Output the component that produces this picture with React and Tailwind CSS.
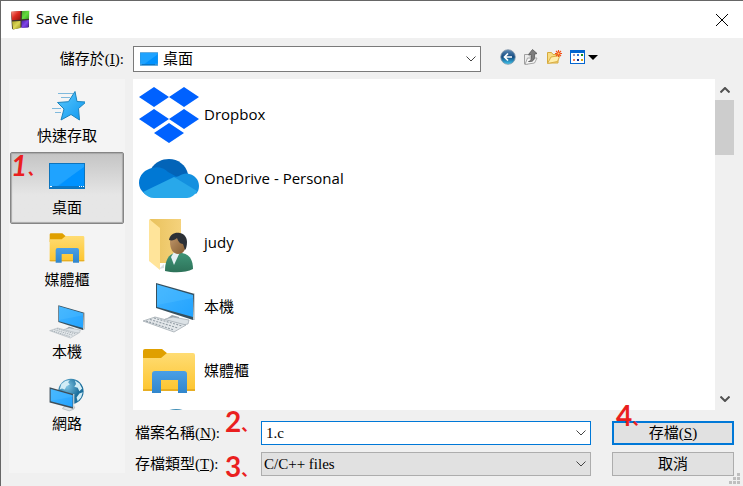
import React from 'react';

const SANS = 'font-["Open_Sans","Noto_Sans_CJK_TC",sans-serif]';
const SERIF = 'font-["Liberation_Serif","Noto_Sans_CJK_TC",serif]';

function AppLogo() {
  return (
    <svg viewBox="0 0 20 20" className="size-5" aria-hidden="true">
      <defs>
        <linearGradient id="lr" x2="1" y2="1"><stop stopColor="#ff9a8c" /><stop offset=".5" stopColor="#dc2a20" /><stop offset="1" stopColor="#8f1510" /></linearGradient>
        <linearGradient id="lg" x2="1" y2="1"><stop stopColor="#4ea530" /><stop offset=".5" stopColor="#62dc3e" /><stop offset="1" stopColor="#3a9a24" /></linearGradient>
        <linearGradient id="ly" x2="1" y2="1"><stop stopColor="#a8a226" /><stop offset=".5" stopColor="#dcd656" /><stop offset="1" stopColor="#95901a" /></linearGradient>
        <linearGradient id="lp" x2="1" y2="1"><stop stopColor="#4a22a0" /><stop offset=".5" stopColor="#7f45e6" /><stop offset="1" stopColor="#4519a8" /></linearGradient>
      </defs>
      <path d="M1 2l9-1h9v16l-8 .5-8 2-1-1z" fill="#3a322a" />
      <path d="M1 1.500L10.500 1v8.700L2 10.200z" fill="url(#lr)" />
      <path d="M12 1l7.300-.2-.3 8-7.200.5z" fill="url(#lg)" />
      <path d="M2 11.500l8.500-.6v7L3 19.500z" fill="url(#ly)" />
      <path d="M11.500 10.700l7.400-.6-.4 7.300-7 .6z" fill="url(#lp)" />
    </svg>
  );
}

function MonitorIcon({ className }) {
  return (
    <svg viewBox="0 0 36 36" className={className} aria-hidden="true">
      <rect x=".5" y="3.500" width="35" height="25" fill="#169cfb" stroke="#0d74bd" />
      <path d="M7 28L35 6v20H7z" fill="#0092ff" />
      <path d="M1 4h34v3L8 26H1z" fill="#1fa3ff" />
      <rect x="1" y="26" width="34" height="2" fill="#0b77c5" />
      <path d="M1 26.500h2M30 26.500h1M32 26.500h1M34 26.500h1" stroke="#fff" />
    </svg>
  );
}

function StarIcon({ className }) {
  return (
    <svg viewBox="0 0 36 36" className={className} aria-hidden="true">
      <defs><linearGradient id="st" x2="1" y2="1"><stop stopColor="#5cc8fa" /><stop offset="1" stopColor="#0c97f2" /></linearGradient></defs>
      <path d="M9 5.500h15M12 9.500h9M3 20.500h9M6 24.500h6" stroke="#7fb9dc" />
      <path d="M26 3.500l2 10 9 .5-7.500 6.500 1 11.500-8.500-5.500-10 5.500 3-11-6.500-6.500 11-.8z" fill="url(#st)" stroke="#1a83bd" strokeLinejoin="round" />
    </svg>
  );
}

function LibraryIcon({ className, viewBox = '0 0 64 64' }) {
  return (
    <svg viewBox={viewBox} className={className} aria-hidden="true">
      <defs>
        <linearGradient id="lf" x2="0" y2="1"><stop stopColor="#ffdc73" /><stop offset="1" stopColor="#fdc52f" /></linearGradient>
        <linearGradient id="lb" x2="0" y2="1"><stop stopColor="#4a9fe6" /><stop offset="1" stopColor="#3186cc" /></linearGradient>
      </defs>
      <path d="M6 12a2 2 0 0 1 2-2h17l6 5-6 8H6z" fill="#e0a000" />
      <path d="M6 19h18l6-5h26a2 2 0 0 1 2 2v34a2 2 0 0 1-2 2H8a2 2 0 0 1-2-2z" fill="url(#lf)" />
      <path d="M6 50h52v2H6z" fill="#e7ae23" />
      <path d="M15 54V35q0-3 3-3h29q3 0 3 3v19h-9V41H24v13z" fill="url(#lb)" />
    </svg>
  );
}

function ComputerIcon({ className, viewBox = '0 -1 64 64' }) {
  return (
    <svg viewBox={viewBox} className={className} aria-hidden="true">
      <defs><linearGradient id="pc" x2="1" y2="1"><stop stopColor="#42b4ff" /><stop offset="1" stopColor="#22a3ff" /></linearGradient></defs>
      <path d="M35 39l7 2v4l-14-1z" fill="#9ba6ae" />
      <path d="M28 43l8-2 16 3-1 4-11 2-12-4z" fill="#dce2e6" stroke="#a0a9b0" strokeWidth=".7" />
      <path d="M19 7l39 11v25l-2 1-37-12z" fill="#36505f" />
      <path d="M57 18h1v25l-2 1z" fill="#ccd4d8" />
      <path d="M20 8.500l36 10.500v22L20 31z" fill="url(#pc)" />
      <path d="M20 8.500l36 10.500v3L20 29z" fill="#5bc3ff" opacity=".3" />
      <path d="M6 45l12-4 31 8-12 7z" fill="#e3e7ea" stroke="#a3acb3" strokeWidth=".8" />
      <path d="M9 45l28 9M13 43.500l28 8.500M17 42l28 8" stroke="#929da5" strokeDasharray="2 1.300" strokeWidth="1.100" />
    </svg>
  );
}

function NetworkIcon({ className }) {
  return (
    <svg viewBox="0 0 64 64" className={className} aria-hidden="true">
      <defs>
        <radialGradient id="gl" cx=".35" cy=".3"><stop stopColor="#7fc4e2" /><stop offset="1" stopColor="#1c6f9d" /></radialGradient>
        <linearGradient id="ns" x2="1" y2="1"><stop stopColor="#42b4ff" /><stop offset="1" stopColor="#22a3ff" /></linearGradient>
      </defs>
      <circle cx="39" cy="27.500" r="22.500" fill="url(#gl)" />
      <path d="M22 14l7-5 8-2-3 4 3 4-6 3-3 6-5-2-4 2zM46 8l8 5 5 9-5 5-3-6-6-2 3-5zM54 31l6-2-3 9-6 7-2-7z" fill="#d2edf6" />
      <path d="M26 55l8-3 12 3-2 4-8 3-12-4z" fill="#dce2e6" stroke="#9ba5ac" />
      <path d="M1 20l42 12v26L1 47z" fill="#3e4e59" />
      <path d="M43 32h2v25l-2 1z" fill="#d4dadd" />
      <path d="M3 23l39 11v21L3 45z" fill="url(#ns)" />
      <path d="M3 23l39 11v3L3 44z" fill="#5bc3ff" opacity=".3" />
    </svg>
  );
}

function DropboxIcon({ className }) {
  return (
    <svg viewBox="0 0 64 64" className={className} aria-hidden="true">
      <path d="M17 4l15 10-15 10L2 14zM47 4l15 10-15 10-15-10zM17 26l15 10-15 10L2 36zM47 26l15 10-15 10-15-10zM32 40l15 10-15 10-15-10z" fill="#0061ff" />
    </svg>
  );
}

function OneDriveIcon({ className }) {
  return (
    <svg viewBox="0 0 64 64" className={className} aria-hidden="true">
      <path d="M14 22c4-7 11-10 18-10 9 0 17 6 19 15l-6 5-9 0z" fill="#0364b8" />
      <path d="M16 21c7-2 12 1 15 4l11 6-34 16C4 44 2 40 2 36c0-8 6-14 14-15z" fill="#0078d4" />
      <path d="M36 31l6-2c3-2 7-3 10-2 6 1 10 6 10 12 0 3-1 6-3 8z" fill="#1490df" />
      <path d="M37 30l23 14c-2 4-6 7-10 7H17c-4 0-8-2-11-6z" fill="#28a8ea" />
    </svg>
  );
}

function UserFolderIcon({ className }) {
  return (
    <svg viewBox="0 0 64 64" className={className} aria-hidden="true">
      <defs>
        <linearGradient id="uf" x2="1" y2="0"><stop stopColor="#e9c25d" /><stop offset="1" stopColor="#f5d27c" /></linearGradient>
        <linearGradient id="ub" x2="0" y2="1"><stop stopColor="#3f9577" /><stop offset="1" stopColor="#2d7259" /></linearGradient>
        <linearGradient id="us" x2="1" y2="1"><stop stopColor="#c49a6d" /><stop offset="1" stopColor="#80592f" /></linearGradient>
      </defs>
      <path d="M13 8h31v44H20z" fill="url(#uf)" />
      <path d="M12 8l11 9v42l-11-9z" fill="#ffe49a" />
      <path d="M22 58l5-5v4z" fill="#d9dfe3" />
      <path d="M28 60c0-11 4-17 10-18h7c6 1 11 5 11 16-7 4-20 4-28 2z" fill="url(#ub)" />
      <path d="M34 46l3-5h6l-6 13z" fill="#e5f0f4" />
      <path d="M33 31c0-6 3-8 8-8s8 4 8 10-3 10-8 10-8-5-8-12z" fill="url(#us)" />
      <path d="M32 29c1-6 6-8 11-7s7 5 7 9-1 7-2 8l-2-6c-3 0-5-3-6-6-2 2-5 3-8 2z" fill="#2c3036" />
    </svg>
  );
}

function BackIcon() {
  return (
    <svg viewBox="0 0 16 16" className="size-4" aria-hidden="true">
      <defs><linearGradient id="bk" x2="0" y2="1"><stop stopColor="#5f8ab5" /><stop offset=".5" stopColor="#124a80" /><stop offset="1" stopColor="#3ec9f2" /></linearGradient></defs>
      <circle cx="8" cy="8" r="7.300" fill="url(#bk)" stroke="#8497a8" strokeWidth=".8" />
      <path d="M12 8H5M8 4.500L4.500 8 8 11.500" fill="none" stroke="#fff" strokeWidth="1.700" />
    </svg>
  );
}

function UpIcon() {
  return (
    <svg viewBox="0 0 16 16" className="size-4" aria-hidden="true">
      <path d="M1.500 15V5.500h4l1 1.500H9v4l-4 4z" fill="#ececec" stroke="#a0a0a0" />
      <path d="M2 15.500L4.500 9H14l-2.500 5z" fill="#f7f7f7" stroke="#a6a6a6" />
      <path d="M5.500 12.500C8.500 12 8.500 9 8.300 5.500H5.500L9.500.5l4.500 4-2.500.7c.6 5-1 8-6 7.300z" fill="#7d7d7d" stroke="#555" strokeWidth=".8" />
    </svg>
  );
}

function NewFolderIcon() {
  return (
    <svg viewBox="0 0 16 16" className="size-4" aria-hidden="true">
      <path d="M1.500 14V3.500h4l1.500 2h5V14z" fill="#f8dc82" stroke="#d6aa3c" />
      <path d="M1.500 14.500L5 8l9-1.500-2.500 6z" fill="#ffeeaa" stroke="#d9ad44" />
      <path d="M12.500 1v7M9 4.500h7M10 2l5 5M15 2l-5 5" stroke="#f2511b" strokeWidth="1.100" />
      <circle cx="12.500" cy="4.500" r="1" fill="#ffd36b" />
    </svg>
  );
}

function ViewIcon() {
  return (
    <svg viewBox="0 0 16 16" className="size-4" aria-hidden="true">
      <rect x="1.500" y="1.500" width="14" height="13" fill="#fff" stroke="#0566d0" />
      <path d="M1 1h15v3H1z" fill="#0566d0" />
      <path d="M4 5h2v2H4z" fill="#9c96b8" /><path d="M8 5h2v2H8z" fill="#3278d8" /><path d="M12 5h2v2h-2z" fill="#1a8a20" />
      <path d="M4 10h2v2H4z" fill="#f08058" /><path d="M8 10h2v2H8z" fill="#102d8c" /><path d="M12 10h2v2h-2z" fill="#d6a010" />
    </svg>
  );
}

function Chevron({ className }) {
  return (
    <svg viewBox="0 0 10 6" className={className} fill="none" stroke="currentColor" aria-hidden="true">
      <path d="M.5.500L5 5 9.500.5" />
    </svg>
  );
}

function Mark({ digit, className }) {
  return (
    <span className={`pointer-events-none absolute flex items-end font-["Lato","Noto_Sans_CJK_JP",sans-serif] text-[28px] leading-6 font-bold text-[#ea1f1f] ${className}`}>
      {digit}<span className="-mb-1 text-base leading-6">、</span>
    </span>
  );
}

const places = [
  { name: '快速存取', Icon: StarIcon },
  { name: '桌面', Icon: MonitorIcon, active: true },
  { name: '媒體櫃', Icon: LibraryIcon, viewBox: '5 8 54 54' },
  { name: '本機', Icon: ComputerIcon, viewBox: '5 5 54 54' },
  { name: '網路', Icon: NetworkIcon },
];

const files = [
  { name: 'Dropbox', Icon: DropboxIcon },
  { name: 'OneDrive - Personal', Icon: OneDriveIcon },
  { name: 'judy', Icon: UserFolderIcon },
  { name: '本機', Icon: ComputerIcon },
  { name: '媒體櫃', Icon: LibraryIcon },
];

export default function App() {
  return (
    <div className={`relative flex h-screen flex-col overflow-hidden border-t border-l border-[#666] bg-[#f0f0f0] text-[15px] text-black ${SANS}`}>
      <header className="flex h-[37px] shrink-0 items-center bg-white pr-3.5 pl-[9px]">
        <AppLogo />
        <h1 className="ml-1.5 flex-1 pb-0.5">Save file</h1>
        <button aria-label="Close">
          <svg viewBox="0 0 14 14" className="size-3.5" stroke="#000" aria-hidden="true"><path d="M1 1l12 12M13 1L1 13" /></svg>
        </button>
      </header>

      <div className="flex shrink-0 items-center pt-2 pb-[7px]">
        <label htmlFor="folder" className={`w-[132px] shrink-0 pr-[9px] text-right ${SERIF}`}>儲存於(<u>I</u>):</label>
        <div className="relative w-[348px] min-w-0">
          <select id="folder" className="block h-[26px] w-full appearance-none border border-[#7a7a7a] bg-white pr-6 pb-0.5 pl-[29px]">
            <option>桌面</option>
          </select>
          <MonitorIcon className="pointer-events-none absolute top-[5px] left-[7px] size-[18px]" />
          <Chevron className="pointer-events-none absolute top-2.5 right-[5px] h-1.5 w-2.5 text-[#444]" />
        </div>
        <div className="-mt-1 ml-[19px] flex items-center gap-[7px]">
          <button aria-label="Back"><BackIcon /></button>
          <button aria-label="Up one level"><UpIcon /></button>
          <button aria-label="New folder"><NewFolderIcon /></button>
          <button aria-label="View" className="flex items-center gap-[3px]">
            <ViewIcon />
            <svg viewBox="0 0 10 5" className="h-[5px] w-2.5" aria-hidden="true"><path d="M0 0h10L5 5z" /></svg>
          </button>
        </div>
      </div>

      <div className="flex min-h-0 flex-1 gap-2 pr-[9px] pl-2">
        <nav className="mb-[13px] flex w-[116px] shrink-0 flex-col bg-[#f4f4f4] px-px pt-px">
          {places.map(({ name, Icon, active, viewBox }) => (
            <button
              key={name}
              className={`relative flex h-[72px] flex-col items-center border pt-[7px] ${active ? 'rounded-xs border-[#858585] bg-linear-to-b from-[#c4c4c4] to-[#e6e6e6] to-60% shadow-[inset_0_0_1px_1px_#a8a8a8]' : 'border-transparent'}`}
            >
              <Icon className="size-9" viewBox={viewBox} />
              <span className="leading-[22px]">{name}</span>
              {active && <Mark digit="1" className="top-0 left-0 italic" />}
            </button>
          ))}
        </nav>

        <main className="flex min-w-0 flex-1 flex-col pb-2.5">
          <div className="flex min-h-0 flex-1">
            <ul className="min-w-0 flex-1 overflow-hidden bg-white pt-1 pl-1">
              {files.map(({ name, Icon }) => (
                <li key={name} className="flex h-16 items-center gap-[3px]">
                  <Icon className="size-16 shrink-0" />
                  <span className="pb-0.5">{name}</span>
                </li>
              ))}
              <li aria-label="網路" className="h-16 pt-px"><NetworkIcon className="size-16" /></li>
            </ul>
            <div className="flex w-[19px] flex-col items-center text-[#505050]">
              <Chevron className="mt-2 mb-[7px] h-1.5 w-2.5 shrink-0 rotate-180 stroke-2" />
              <div className="h-[55px] w-full bg-[#cdcdcd]" />
              <Chevron className="mt-auto mb-2 h-1.5 w-2.5 shrink-0 stroke-2" />
            </div>
          </div>

          <div className={`mt-[11px] grid grid-cols-[128px_minmax(0,1fr)_122px] items-center gap-y-[7px] ${SERIF}`}>
            <label htmlFor="filename" className="relative pl-0.5 leading-6">
              檔案名稱(<u>N</u>):
              <Mark digit="2" className="-top-3 left-[92px]" />
            </label>
            <div className="relative mr-[21px]">
              <input id="filename" defaultValue="1.c" className="block h-6 w-full border border-[#0078d7] bg-white px-1 outline-none" />
              <Chevron className="pointer-events-none absolute top-[9px] right-[5px] h-1.5 w-2.5 text-[#444]" />
            </div>
            <button className="relative h-6 border-2 border-[#0078d7] bg-[#e1e1e1] leading-5">
              存檔(<u>S</u>)
              <Mark digit="4" className="-top-5 left-0.5" />
            </button>
            <label htmlFor="filetype" className="relative pl-0.5 leading-6">
              存檔類型(<u>T</u>):
              <Mark digit="3" className="top-0.5 left-[92px]" />
            </label>
            <div className="relative mr-[21px]">
              <select id="filetype" className="block h-6 w-full appearance-none border border-[#adadad] bg-[#e1e1e1] px-0.5">
                <option>C/C++ files</option>
              </select>
              <Chevron className="pointer-events-none absolute top-[9px] right-[5px] h-1.5 w-2.5 text-[#444]" />
            </div>
            <button className="h-6 border border-[#adadad] bg-[#e1e1e1] leading-5">取消</button>
          </div>
        </main>
      </div>

      <svg viewBox="0 0 11 11" className="absolute right-[3px] bottom-0.5 size-[11px]" fill="#bfbfbf" aria-hidden="true">
        <path d="M8 0h3v3H8zM4 4h3v3H4zM8 4h3v3H8zM0 8h3v3H0zM4 8h3v3H4zM8 8h3v3H8z" />
      </svg>
    </div>
  );
}
